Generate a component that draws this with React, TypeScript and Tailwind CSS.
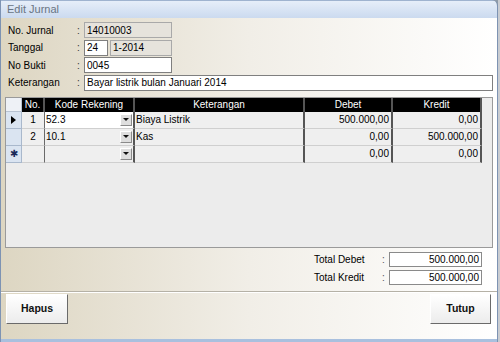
import React from "react"

const font = { fontFamily: '"Liberation Sans", Arial, sans-serif' }

type Row = {
  no: string
  kode: string
  ket: string
  debet: string
  kredit: string
  marker: "current" | "new" | "none"
  active?: boolean
}

const rows: Row[] = [
  { no: "1", kode: "52.3", ket: "Biaya Listrik", debet: "500.000,00", kredit: "0,00", marker: "current", active: true },
  { no: "2", kode: "10.1", ket: "Kas", debet: "0,00", kredit: "500.000,00", marker: "none" },
  { no: "", kode: "", ket: "", debet: "0,00", kredit: "0,00", marker: "new" },
]

function DropBtn() {
  return (
    <div className="w-[12px] h-[12px] mr-[1px] flex items-center justify-center bg-[#dedede] border border-t-white border-l-white border-r-[#8a8a8a] border-b-[#8a8a8a]">
      <svg width="6" height="4" viewBox="0 0 6 4">
        <polygon points="0,0 6,0 3,3" fill="#111" />
      </svg>
    </div>
  )
}

function Field({ value, disabled, className }: { value: string; disabled?: boolean; className: string }) {
  return (
    <div
      className={
        "h-[16px] flex items-center px-[2px] text-[10px] text-black border " +
        (disabled ? "bg-[#e6e3dc] border-[#a9a9a9] " : "bg-white border-[#7f7f7f] ") +
        className
      }
    >
      {value}
    </div>
  )
}

function LabelRow({ label, children }: { label: string; children: React.ReactNode }) {
  return (
    <div className="flex items-center h-[16px]">
      <div className="w-[69px] text-[10px] text-black">{label}</div>
      <div className="w-[7px] text-[10px] text-[#333]">:</div>
      {children}
    </div>
  )
}

export default function App() {
  return (
    <div className="w-[500px] h-[342px] flex bg-[#8e9aa8] overflow-hidden" style={font}>
      {/* window */}
      <div className="w-[498px] h-[342px] flex flex-col border-l border-r border-[#7d93b3] rounded-tr-[6px] overflow-hidden">
        {/* title bar */}
        <div className="h-[18px] shrink-0 flex items-center pl-[6px] bg-gradient-to-b from-[#e6eef9] to-[#cbdaef] border-t border-[#9fb3cf] text-[11px] text-[#6a7583]">
          Edit Jurnal
        </div>

        {/* body */}
        <div className="flex-1 flex flex-col bg-gradient-to-r from-[#ddd6c2] via-[#f1eee7] to-white">
          {/* header fields */}
          <div className="flex flex-col gap-[1.5px] pl-[7px] pr-[4px] pt-[4px]">
            <LabelRow label="No. Jurnal">
              <Field value="14010003" disabled className="w-[88px]" />
            </LabelRow>
            <LabelRow label="Tanggal">
              <div className="flex gap-[2px]">
                <Field value="24" className="w-[24px]" />
                <Field value="1-2014" disabled className="w-[62px]" />
              </div>
            </LabelRow>
            <LabelRow label="No Bukti">
              <Field value="0045" className="w-[88px]" />
            </LabelRow>
            <LabelRow label="Keterangan">
              <Field value="Bayar listrik bulan Januari 2014" className="flex-1" />
            </LabelRow>
          </div>

          {/* grid */}
          <div className="mx-[4px] mt-[6px] h-[151px] border border-[#9a9a9a] bg-[#ececec] overflow-hidden">
            <div className="grid grid-cols-[16px_23px_90px_170px_88px_89px] text-[10px]">
              {/* header */}
              <div className="h-[14px] bg-[#eef1f6] border-r border-b border-[#b8c3d2]" />
              <div className="h-[14px] bg-black text-white flex items-center justify-center border-r-2 border-[#555]">No.</div>
              <div className="h-[14px] bg-black text-white flex items-center justify-center border-r-2 border-[#555]">Kode Rekening</div>
              <div className="h-[14px] bg-black text-white flex items-center justify-center border-r-2 border-[#555]">Keterangan</div>
              <div className="h-[14px] bg-black text-white flex items-center justify-center border-r-2 border-[#555]">Debet</div>
              <div className="h-[14px] bg-black text-white flex items-center justify-center border-r-2 border-[#555]">Kredit</div>

              {rows.map((r, i) => (
                <React.Fragment key={i}>
                  <div className="h-[17px] bg-[#dae4f1] border-r border-b border-[#a9b8cc] flex items-center justify-center">
                    {r.marker === "current" && (
                      <svg width="5" height="8" viewBox="0 0 5 8">
                        <polygon points="0,0 5,4 0,8" fill="#000" />
                      </svg>
                    )}
                    {r.marker === "new" && <span className="text-[10px] leading-none text-[#1a2a5a]">✱</span>}
                  </div>
                  <div className="h-[17px] bg-[#efefef] border-r border-b border-r-[#6a6a6a] border-b-[#cfcfcf] flex items-center justify-center text-black">
                    {r.no}
                  </div>
                  <div
                    className={
                      "h-[17px] border-r-2 border-b border-r-[#555] border-b-[#cfcfcf] flex items-center justify-between pl-[1px] text-black " +
                      (r.active ? "bg-white" : "bg-[#efefef]")
                    }
                  >
                    <span>{r.kode}</span>
                    <DropBtn />
                  </div>
                  <div className="h-[17px] bg-[#efefef] border-r-2 border-b border-r-[#555] border-b-[#cfcfcf] flex items-center pl-[1px] text-black">
                    {r.ket}
                  </div>
                  <div className="h-[17px] bg-[#efefef] border-r-2 border-b border-r-[#555] border-b-[#cfcfcf] flex items-center justify-end pr-[2px] text-black">
                    {r.debet}
                  </div>
                  <div className="h-[17px] bg-[#efefef] border-r-2 border-b border-r-[#555] border-b-[#cfcfcf] flex items-center justify-end pr-[2px] text-black">
                    {r.kredit}
                  </div>
                </React.Fragment>
              ))}
            </div>
          </div>

          {/* totals */}
          <div className="flex flex-col gap-[3px] items-end pr-[15px] mt-[4px]">
            <div className="flex items-center">
              <div className="w-[68px] text-[10px] text-black">Total Debet</div>
              <div className="w-[7px] text-[10px] text-[#555]">:</div>
              <div className="w-[93px] h-[15px] bg-white border border-[#8a8a8a] flex items-center justify-end pr-[2px] text-[10px] text-black">
                500.000,00
              </div>
            </div>
            <div className="flex items-center">
              <div className="w-[68px] text-[10px] text-black">Total Kredit</div>
              <div className="w-[7px] text-[10px] text-[#555]">:</div>
              <div className="w-[93px] h-[15px] bg-white border border-[#8a8a8a] flex items-center justify-end pr-[2px] text-[10px] text-black">
                500.000,00
              </div>
            </div>
          </div>

          {/* separator */}
          <div className="mt-[6px] h-[2px] border-t border-b border-t-[#b5b1a6] border-b-white" />

          {/* buttons */}
          <div className="flex justify-between pl-[5px] pr-[6px] mt-[1px]">
            <button className="w-[62px] h-[30px] bg-gradient-to-b from-white to-[#ececec] border border-t-white border-l-white border-r-[#6a6a6a] border-b-[#6a6a6a] text-[10.5px] font-bold text-[#111]">
              Hapus
            </button>
            <button className="w-[61px] h-[30px] bg-gradient-to-b from-white to-[#ececec] border border-t-white border-l-white border-r-[#6a6a6a] border-b-[#6a6a6a] text-[10.5px] font-bold text-[#111]">
              Tutup
            </button>
          </div>
          <div className="flex-1" />
        </div>

        {/* bottom frame */}
        <div className="h-[3px] shrink-0 bg-[#a9c0de]" />
      </div>
      <div className="flex-1 bg-[#c9ccd1]" />
    </div>
  )
}
